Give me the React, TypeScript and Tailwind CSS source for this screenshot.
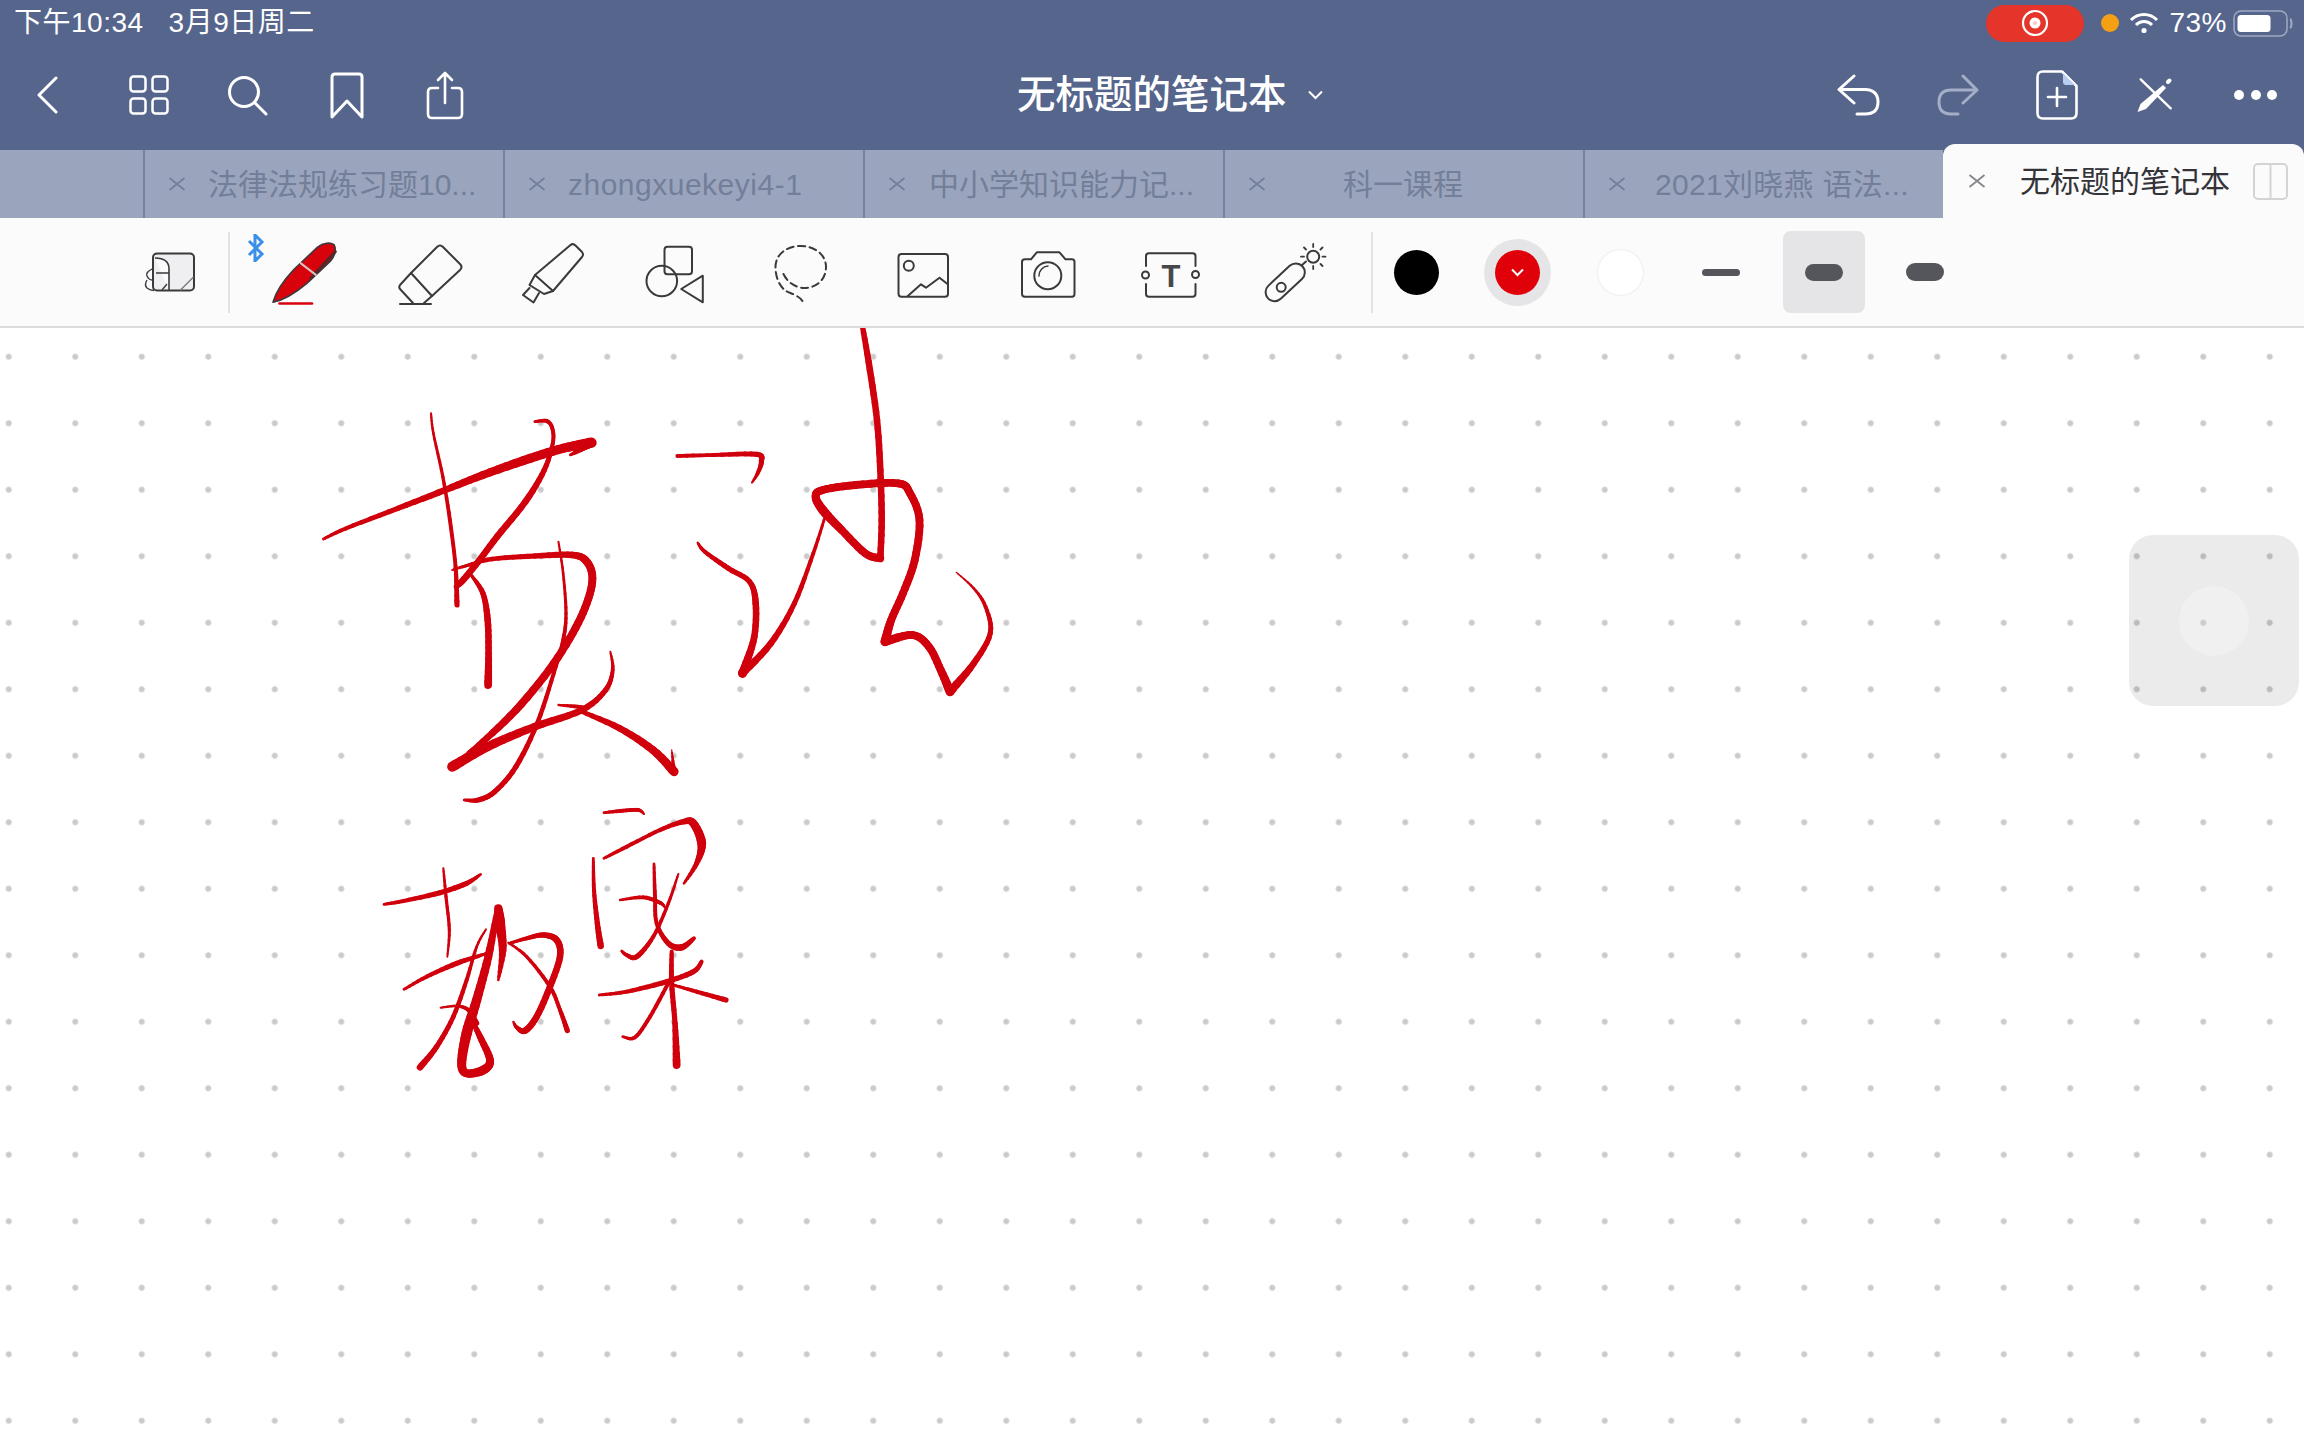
import React from 'react';

type Pt = [number, number, number];

// handwriting, in the coordinates of the crops it was traced from
const upperInk: Pt[][] = [
  [[320,280,1.5],[325,340,2],[345,470,2.5],[360,600,3],[372,740,3],[375,855,4]],
  [[92,657,2],[140,625,3],[250,565,4],[350,510,5],[430,465,6],[530,415,7],[600,385,7],[660,368,8]],
  [[660,370,6],[635,390,4],[615,405,2]],
  [[540,305,2],[565,303,3],[577,325,3],[578,370,3],[560,450,4],[520,545,5],[460,650,5],[420,725,5],[385,785,5],[372,800,3]],
  [[365,750,1.5],[400,735,2.5],[450,717,3.5],[540,708,4],[620,705,5],[650,725,6],[662,775,6],[650,850,6],[620,940,6],[570,1050,6],[500,1170,6],[430,1265,5],[400,1300,4]],
  [[590,665,1.5],[600,760,2],[606,880,2.5],[600,960,3],[580,1060,3],[545,1210,3.5],[500,1340,4],[455,1415,4],[420,1440,4],[390,1440,2]],
  [[405,765,2],[430,820,4],[440,900,5],[442,1000,5],[441,1095,6]],
  [[590,1155,1.5],[630,1160,3],[650,1165,3]],
  [[365,1340,8],[440,1280,7],[540,1220,6],[640,1170,5],[690,1110,4],[705,1050,3],[700,995,1.5]],
  [[640,1175,3],[720,1225,5],[790,1290,6],[835,1355,7]],
  [[835,1355,4],[830,1290,1]],
  [[842,408,3],[920,405,3],[1010,403,4],[1020,425,4],[1012,460,3],[1000,488,1.5]],
  [[885,668,1.5],[900,695,3],[950,745,4],[995,785,4],[1008,850,5],[1005,950,5],[985,1040,6],[980,1060,7]],
  [[980,1060,6],[1040,970,5],[1090,850,4],[1130,700,3],[1155,590,2]],
  [[1235,25,4],[1250,150,5],[1265,300,5],[1272,450,5],[1275,600,5],[1272,715,5]],
  [[1272,715,6],[1240,700,6],[1190,630,6],[1150,570,7],[1135,530,6],[1150,510,6],[1220,495,6],[1310,490,6],[1335,520,6],[1355,600,6],[1345,720,6],[1320,820,6],[1295,900,6],[1282,965,7]],
  [[1282,965,7],[1340,945,6],[1375,980,6],[1400,1050,6],[1420,1115,7]],
  [[1420,1115,7],[1470,1030,5],[1505,940,4],[1495,860,3],[1470,805,2],[1433,757,1]],
];

const lowerInk: Pt[][] = [
  [[72,343,2],[130,333,3],[240,308,4],[320,280,4],[362,253,2]],
  [[250,235,1.5],[258,320,2.5],[268,420,2.5],[262,500,1.5]],
  [[132,598,2],[200,560,3],[290,520,4],[350,500,3],[380,490,2]],
  [[378,418,1.5],[350,470,2],[320,570,3],[280,680,3.5],[230,770,4],[180,832,5]],
  [[242,653,1.5],[290,648,2],[325,660,3],[350,700,4]],
  [[415,355,6],[420,400,8],[428,480,6],[415,570,2]],
  [[410,370,4],[385,500,6],[350,630,7],[320,730,8],[305,820,7],[320,850,6],[370,840,7],[390,810,6],[360,740,5],[335,690,3]],
  [[448,460,2],[500,445,3],[550,435,4],[590,450,5],[600,500,5],[570,590,5],[530,680,5],[495,722,5],[470,712,3],[460,695,1.5]],
  [[445,458,1.5],[500,500,2.5],[570,590,3],[600,660,3],[622,722,4]],
  [[732,68,2],[790,62,3],[835,60,3],[852,72,1.5]],
  [[732,205,2],[800,170,3],[900,120,3],[970,95,4],[1000,100,6],[1025,160,7],[1010,220,4],[972,280,2]],
  [[700,205,2],[702,300,3],[712,400,4],[722,468,5]],
  [[780,330,1.5],[850,322,3],[900,338,3],[915,352,1.5]],
  [[882,222,2],[885,320,3],[890,400,3],[925,460,4],[965,472,5],[1002,445,3]],
  [[955,252,1.5],[925,340,2.5],[880,440,3],[830,500,4],[800,495,3],[785,483,2]],
  [[718,615,2],[800,605,3],[920,575,4],[1000,545,4],[1025,515,3]],
  [[935,485,3],[935,580,4],[945,700,4],[950,825,6]],
  [[922,585,3],[870,680,3],[825,742,3],[788,740,2]],
  [[940,585,2],[1010,605,3],[1098,630,4]],
];

const CANVAS_TOP = 328;

// catmull-rom through the points, with the width eased along the way
function sample(stroke: Pt[]) {
  const out: Pt[] = [];
  for (let i = 0; i < stroke.length - 1; i++) {
    const p0 = stroke[Math.max(i - 1, 0)];
    const p1 = stroke[i];
    const p2 = stroke[i + 1];
    const p3 = stroke[Math.min(i + 2, stroke.length - 1)];
    for (let s = 0; s < 6; s++) {
      const t = s / 6;
      const q = (a: number, b: number, c: number, d: number) =>
        0.5 * (2 * b + (c - a) * t + (2 * a - 5 * b + 4 * c - d) * t * t + (3 * b - a - 3 * c + d) * t * t * t);
      out.push([q(p0[0], p1[0], p2[0], p3[0]), q(p0[1], p1[1], p2[1], p3[1]), p1[2] + (p2[2] - p1[2]) * t]);
    }
  }
  out.push(stroke[stroke.length - 1]);
  return out;
}

function Ink({ strokes, sx, ox, oy }: { strokes: Pt[][]; sx: number; ox: number; oy: number }) {
  return (
    <>
      {strokes.map((stroke, i) => {
        const pts = sample(stroke);
        return pts.slice(1).map((p, j) => (
          <line
            key={`${i}-${j}`}
            x1={pts[j][0] / sx + ox}
            y1={pts[j][1] / 3 + oy - CANVAS_TOP}
            x2={p[0] / sx + ox}
            y2={p[1] / 3 + oy - CANVAS_TOP}
            strokeWidth={p[2] * 1.3}
          />
        ));
      })}
    </>
  );
}

function CloseMark({ className }: { className: string }) {
  return (
    <svg width="18" height="14" viewBox="0 0 18 14" fill="none" stroke="currentColor" strokeWidth="1.8" className={className}>
      <path d="M1.5 1 L16.5 13 M16.5 1 L1.5 13" />
    </svg>
  );
}

const tabs = [
  { label: '法律法规练习题10...', labelClass: 'ml-[22px]' },
  { label: 'zhongxuekeyi4-1', labelClass: 'ml-[22px] tracking-[0.5px]' },
  { label: '中小学知识能力记...', labelClass: 'ml-[23px]' },
  { label: '科一课程', labelClass: 'ml-[77px]' },
  { label: '2021刘晓燕 语法...', labelClass: 'ml-[29px] tracking-[0.3px]' },
];

// toolbar tools: every one is drawn in a 123x109 cell
function Tool({ children }: { children: React.ReactNode }) {
  return (
    <svg width="123" height="109" viewBox="0 0 123 109" fill="none" stroke="#3a3a3c" strokeWidth="2" strokeLinejoin="round" strokeLinecap="round" className="shrink-0">
      {children}
    </svg>
  );
}

export default function App() {
  return (
    <div className="relative flex h-[1444px] w-[2304px] flex-col overflow-hidden bg-white font-['Liberation_Sans','Noto_Sans_CJK_SC',sans-serif]">
      {/* Status bar */}
      <div className="flex h-[46px] items-center bg-[#56658c] pl-[14px] pr-[11px] text-[28px] tracking-[0.5px] text-white">
        <span>下午10:34</span>
        <span className="ml-[25px]">3月9日周二</span>
        <div className="ml-auto flex items-center">
          <div className="flex h-[37px] w-[98px] items-center justify-center rounded-full bg-[#e5352b]">
            <svg width="28" height="28" viewBox="0 0 28 28" fill="none">
              <circle cx="14" cy="14" r="12" stroke="#fff" strokeWidth="2.2" />
              <circle cx="14" cy="14" r="5.5" fill="#fff" />
              <circle cx="14" cy="14" r="2" fill="#f6c9c6" />
            </svg>
          </div>
          <div className="ml-[17px] h-[18px] w-[18px] rounded-full bg-[#f59f14]" />
          <svg width="30" height="22" viewBox="0 0 30 22" fill="none" stroke="#fff" strokeWidth="3" className="ml-[10px]">
            <path d="M2 8 A18 18 0 0 1 28 8" />
            <path d="M7 13 A11 11 0 0 1 23 13" />
            <circle cx="15" cy="18.5" r="2.6" fill="#fff" stroke="none" />
          </svg>
          <span className="ml-[10px]">73%</span>
          <svg width="60" height="27" viewBox="0 0 60 27" fill="none" className="ml-[6px]">
            <rect x="1" y="1" width="53" height="25" rx="7" stroke="#9fa9c3" strokeWidth="1.5" />
            <rect x="4.5" y="5" width="33" height="17" rx="3.5" fill="#fff" />
            <path d="M57 9 C59 10 59 17 57 18" stroke="#9fa9c3" strokeWidth="2" />
          </svg>
        </div>
      </div>

      {/* Nav bar */}
      <div className="flex h-[98px] items-center bg-[#56658c] text-white">
        <div className="flex items-center pl-[36px]">
          <svg width="22" height="38" viewBox="0 0 22 38" fill="none" stroke="#fff" strokeWidth="3" strokeLinecap="round" strokeLinejoin="round">
            <path d="M20 2 L3 19 L20 36" />
          </svg>
          <svg width="40" height="40" viewBox="0 0 40 40" fill="none" stroke="#fff" strokeWidth="2.5" className="ml-[71px]">
            <rect x="1.5" y="1.5" width="15" height="15" rx="3" />
            <rect x="23.5" y="1.5" width="15" height="15" rx="3" />
            <rect x="1.5" y="23.5" width="15" height="15" rx="3" />
            <rect x="23.5" y="23.5" width="15" height="15" rx="3" />
          </svg>
          <svg width="41" height="41" viewBox="0 0 41 41" fill="none" stroke="#fff" strokeWidth="3" strokeLinecap="round" className="ml-[58px]">
            <circle cx="17" cy="17" r="14.5" />
            <path d="M27.5 27.5 L39 39" />
          </svg>
          <svg width="34" height="47" viewBox="0 0 34 47" fill="none" stroke="#fff" strokeWidth="3" strokeLinejoin="round" className="ml-[62px]">
            <path d="M2 45 V5 Q2 2 5 2 H29 Q32 2 32 5 V45 L17 29 Z" />
          </svg>
          <svg width="38" height="49" viewBox="0 0 38 49" fill="none" stroke="#fff" strokeWidth="2.6" strokeLinecap="round" strokeLinejoin="round" className="ml-[62px]">
            <path d="M12 17 H6 Q2 17 2 21 V43 Q2 47 6 47 H32 Q36 47 36 43 V21 Q36 17 32 17 H26" />
            <path d="M19 32 V3 M12 9 L19 2 L26 9" />
          </svg>
        </div>

        <div className="ml-[553px] flex items-center">
          <span className="text-[38.5px] font-medium leading-none">无标题的笔记本</span>
          <svg width="15" height="10" viewBox="0 0 15 10" fill="none" stroke="#fff" strokeWidth="2" className="ml-[21px]">
            <path d="M1 1.5 L7.5 8 L14 1.5" />
          </svg>
        </div>

        <div className="ml-auto flex items-center pr-[27px]">
          <svg width="43" height="42" viewBox="0 0 43 42" fill="none" stroke="#fff" strokeWidth="3" strokeLinecap="round" strokeLinejoin="round">
            <path d="M17 2 L2 15.5 L17 29" />
            <path d="M3 15.5 H28 Q41 16 41 28 Q41 40 28 40 H20" />
          </svg>
          <svg width="43" height="42" viewBox="0 0 43 42" fill="none" stroke="#a4aec6" strokeWidth="3" strokeLinecap="round" strokeLinejoin="round" className="ml-[56px]">
            <path d="M27 2 L41 16 L27 29" />
            <path d="M40 16 H15 Q3 16 3 28 Q3 40 15 40 H22" />
          </svg>
          <svg width="42" height="50" viewBox="0 0 42 50" fill="none" stroke="#fff" strokeWidth="2.6" strokeLinejoin="round" className="ml-[57px]">
            <path d="M7 1.5 H26 L40.5 16 V43 Q40.5 48.5 35 48.5 H7 Q1.5 48.5 1.5 43 V7 Q1.5 1.5 7 1.5 Z" />
            <path d="M27 3 L39 15 H30 Q27 15 27 12 Z" fill="#b9cdf0" stroke="none" />
            <path d="M21 18 V36 M12 27 H30" strokeLinecap="round" />
          </svg>
          <svg width="36" height="36" viewBox="0 0 36 36" fill="none" stroke="#fff" strokeLinecap="round" className="ml-[59px]">
            <path d="M3.7 2.3 L33.7 31.3" strokeWidth="2.4" />
            <path d="M0.5 35 L3.5 27 L26 8 L29 11 L9 32 Z" fill="#fff" stroke="none" />
            <path d="M31 5 L32.5 3.5" strokeWidth="4" />
          </svg>
          <div className="ml-[61px] flex w-[43px] justify-between">
            <div className="h-[10px] w-[10px] rounded-full bg-white" />
            <div className="h-[10px] w-[10px] rounded-full bg-white" />
            <div className="h-[10px] w-[10px] rounded-full bg-white" />
          </div>
        </div>
      </div>

      {/* Tabs */}
      <div className="flex h-[74px] items-end bg-[#56658c]">
        <div className="h-[68px] w-[143px] bg-[#9aa5bd]" />
        {tabs.map((tab) => (
          <div key={tab.label} className="flex h-[68px] w-[360px] items-center border-l-2 border-[#76819d] bg-[#9aa5bd] pl-[23px] text-[#737e98]">
            <CloseMark className="shrink-0" />
            <span className={`${tab.labelClass} whitespace-nowrap text-[30px]`}>{tab.label}</span>
          </div>
        ))}
        <div className="flex h-[74px] flex-1 items-center rounded-t-[12px] bg-[#fbfbfb] pl-[25px] text-[#333338]">
          <CloseMark className="shrink-0 text-[#85858a]" />
          <span className="ml-[34px] whitespace-nowrap text-[30px]">无标题的笔记本</span>
          <svg width="35" height="37" viewBox="0 0 35 37" fill="none" stroke="#d4d4d6" strokeWidth="2" className="ml-[23px]">
            <rect x="1" y="1" width="33" height="35" rx="4" />
            <path d="M17.5 1 V36" />
          </svg>
        </div>
      </div>

      {/* Toolbar */}
      <div className="flex h-[110px] items-center border-b-2 border-[#dcdcde] bg-[#fbfbfb] pl-[140px]">
        <svg width="60" height="50" viewBox="0 0 60 50" fill="none" stroke="#3a3a3c" strokeWidth="2" className="shrink-0">
          <rect x="13" y="6.5" width="41" height="37" rx="4" fill="#efeff1" />
          <path d="M40 43.5 L53.5 30" strokeWidth="1.2" stroke="#77777a" />
          <path d="M15 11 Q29 11 29 22 V43.5 M16 26 H29" fill="#fbfbfb" strokeWidth="1.6" />
          <path d="M12 22 Q5 26 7 29 Q9 33 12 33 M7 33 Q4 38 7 41 Q10 43.5 14 43.5 M22 43 L27 37" strokeWidth="1.4" />
        </svg>
        <div className="ml-[28px] h-[81px] w-[2px] shrink-0 bg-[#e2e2e4]" />

        <div className="relative ml-[16px] shrink-0">
          <Tool>
            <g transform="translate(27,84.3) rotate(-43.4)">
              <path d="M0 0 C8 -5 20 -8.5 38 -9.5 L70 -9.5 C78 -9 83 -4 84 0 C83 4 78 9 70 9.5 L38 9.5 C20 8.5 8 5 0 0 Z" fill="#d8020c" strokeWidth="1.6" />
              <path d="M44 8.5 L80 6" stroke="#55282a" strokeWidth="3" />
              <path d="M47 -9.5 L50 9.5" stroke="#d5c4c4" strokeWidth="2" />
            </g>
            <path d="M33.5 85.5 H66" stroke="#d8020c" strokeWidth="2.6" />
          </Tool>
          <svg width="18" height="28" viewBox="0 0 18 28" fill="none" stroke="#3b8fe8" strokeWidth="3" className="absolute left-[1px] top-[16px]">
            <path d="M2 7 L15 20 L8 27 V1 L15 8 L2 21" />
          </svg>
        </div>

        <Tool>
          <path d="M68 29 Q71 26 74 29 L91 46 Q94 49 91 52 L63 78 L42 55 Z" />
          <path d="M42 55 L31 67 Q29.5 69 31 71 L44 85 M55 85 L63 78" />
          <path d="M31 86 H62" />
        </Tool>
        <Tool>
          <path d="M78.5 27 Q81 25 83.5 27.5 L90 34 Q92 36.5 90 39 L61 73 L43 57 Z" />
          <path d="M43 57 L37.5 67 L52 76 L61 73" />
          <path d="M37.5 70 L31 77 L41.5 84.5 L47 75" />
        </Tool>
        <Tool>
          <rect x="49.5" y="28.7" width="27.5" height="27.5" rx="3" />
          <circle cx="46.8" cy="63" r="15.3" />
          <path d="M87.8 57.7 V84.3 L66.2 71 Z" />
        </Tool>
        <Tool>
          <path d="M45.5 56 C50 66 60 70 66 70 C78 70 88 62 88 49 C88 36 76 28 62.5 28 C49 28 37.5 36 37.5 49 C37.5 60 42 69 48 73 C54 76 62 78 65 84" strokeDasharray="7 4.5" />
        </Tool>
        <Tool>
          <rect x="37.5" y="36" width="49.5" height="42.7" rx="3" />
          <circle cx="47.8" cy="47.7" r="5" />
          <path d="M46.8 78 L60 66.3 L65 69.7 L78.5 59.7 L86.8 66.3" />
        </Tool>
        <Tool>
          <path d="M41 41.3 H47 L52.8 34.3 H75.5 L81.5 41.3 H88 Q90.5 41.3 90.5 44 V76 Q90.5 78.7 88 78.7 H41 Q38 78.7 38 76 V44 Q38 41.3 41 41.3 Z" />
          <circle cx="63.8" cy="57.7" r="13.5" />
          <path d="M55 58 A9.5 9.5 0 0 1 64 48" strokeWidth="1.5" />
        </Tool>
        <Tool>
          <path d="M39 48 V38 Q39 35.3 42 35.3 H85.5 Q88.5 35.3 88.5 38 V48 M39 66 V76 Q39 78.7 42 78.7 H85.5 Q88.5 78.7 88.5 76 V66" />
          <circle cx="38.5" cy="57" r="3.5" />
          <circle cx="88.5" cy="56.5" r="3.5" />
          <text x="64" y="68.5" fontSize="31" fontWeight="700" fill="#48484a" stroke="none" textAnchor="middle" fontFamily="Liberation Sans, sans-serif">T</text>
        </Tool>
        <Tool>
          <rect x="31.7" y="55.3" width="47" height="18" rx="9" transform="rotate(-43 55.2 64.3)" />
          <circle cx="51.2" cy="69.3" r="4.5" />
          <path d="M72 47 L76 43.5" />
          <circle cx="83.2" cy="38.7" r="6" />
          <path d="M83.2 26 V29 M83.2 48 V51 M71 38.7 H74 M92.5 38.7 H95.5 M74 29.5 L76 31.5 M90.5 46 L92.5 48 M90.5 31.5 L92.5 29.5" strokeWidth="1.8" />
        </Tool>

        <div className="ml-[18px] h-[81px] w-[2px] shrink-0 bg-[#e2e2e4]" />

        {/* Colours */}
        <div className="ml-[21px] h-[45px] w-[45px] shrink-0 rounded-full bg-black" />
        <div className="ml-[45px] flex h-[67px] w-[67px] shrink-0 items-center justify-center rounded-full bg-[#e5e5e7]">
          <div className="flex h-[45px] w-[45px] items-center justify-center rounded-full bg-[#e00009]">
            <svg width="13" height="9" viewBox="0 0 13 9" fill="none" stroke="#fff" strokeWidth="2">
              <path d="M1 1.5 L6.5 7 L12 1.5" />
            </svg>
          </div>
        </div>
        <div className="ml-[47px] h-[45px] w-[45px] shrink-0 rounded-full bg-white shadow-[0_0_2px_#d8d8d8]" />

        {/* Line widths */}
        <div className="ml-[59px] h-[7px] w-[38px] shrink-0 rounded-full bg-[#55555c]" />
        <div className="ml-[43px] flex h-[82px] w-[82px] shrink-0 items-center justify-center rounded-[8px] bg-[#e5e5e7]">
          <div className="h-[17px] w-[38px] rounded-full bg-[#55555c]" />
        </div>
        <div className="ml-[41px] h-[18px] w-[38px] shrink-0 rounded-full bg-[#55555c]" />
      </div>

      {/* Dotted page */}
      <div className="relative flex-1 bg-white bg-[radial-gradient(circle,#cbcbcb_2.5px,transparent_3.5px)] bg-[length:66.5px_66.5px] bg-[position:-24.5px_-4.5px]">
        <svg width="2304" height="1116" className="absolute left-0 top-0" stroke="#d0000c" strokeLinecap="round" fill="none">
          <Ink strokes={upperInk} sx={1568 / 740} ox={280} oy={320} />
          <Ink strokes={lowerInk} sx={3} ox={360} oy={790} />
        </svg>
        <div className="absolute right-[5px] top-[207px] flex h-[171px] w-[170px] items-center justify-center rounded-[24px] bg-black/[0.08]">
          <div className="h-[70px] w-[70px] rounded-full bg-white/25" />
        </div>
      </div>
    </div>
  );
}
